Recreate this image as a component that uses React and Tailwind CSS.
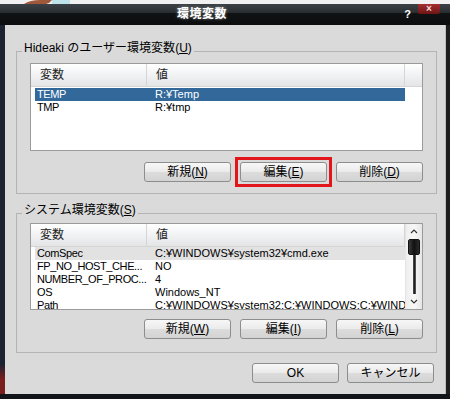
import React from 'react';

const FONT = "font-['Liberation_Sans','Noto_Sans_CJK_JP',sans-serif]";

function Btn({ label, m, className = '' }) {
  return (
    <button
      className={`h-[20px] w-[87px] rounded-[3px] border border-[#8c8d8d] bg-[linear-gradient(to_bottom,#f7f7f7,#ebebeb_48%,#dcdcdc_52%,#d3d3d3)] text-[12px] leading-none text-black ${className}`}
    >
      {label}
      {m && (
        <>
          (<span className="underline">{m}</span>)
        </>
      )}
    </button>
  );
}

function Header({ extra = true }) {
  return (
    <div className="flex h-[23px] border-b border-[#d5d5d5] bg-[linear-gradient(to_bottom,#ffffff,#f1f2f4_50%,#e4e5e7)] text-[12px] leading-[23px] text-[#222]">
      <div className="w-[116px] border-r border-[#d5d5d5] pl-[9px]">変数</div>
      <div className="w-[258px] border-r border-[#d5d5d5] pl-[9px]">値</div>
      {extra && <div className="flex-1" />}
    </div>
  );
}

function Row({ name, value, selected, dim }) {
  const bg = selected ? 'bg-[#32689a] text-white' : dim ? 'bg-[#e2e2e2] text-black' : 'text-black';
  return (
    <div className={`ml-[4px] flex h-[13px] w-[370px] whitespace-nowrap text-[11px] leading-[13px] ${bg}`}>
      <div className="w-[112px] overflow-hidden pl-[2px] tracking-[-0.4px]">{name}</div>
      <div className="flex-1 overflow-hidden pl-[8px]">{value}</div>
    </div>
  );
}

function Scrollbar() {
  return (
    <div className="flex w-[17px] flex-col items-center border-l border-[#e4e4e4] bg-[linear-gradient(to_right,#eeeeee,#f8f8f8,#e6e6e6)]">
      <div className="flex h-[15px] items-center justify-center">
        <svg width="8" height="5" viewBox="0 0 8 5">
          <path d="M1 4 L4 1 L7 4" fill="none" stroke="#333" strokeWidth="1.2" />
        </svg>
      </div>
      <div className="h-[16px] w-[12px] rounded-[2px] border border-[#111] bg-[linear-gradient(to_right,#3a3a3a,#111_50%,#2a2a2a)]" />
      <div className="h-[39px] w-[3px] bg-[linear-gradient(to_right,#555,#222,#666)]" />
      <div className="flex h-[15px] items-center justify-center">
        <svg width="8" height="5" viewBox="0 0 8 5">
          <path d="M1 1 L4 4 L7 1" fill="none" stroke="#333" strokeWidth="1.2" />
        </svg>
      </div>
    </div>
  );
}

function Group({ title, m, className = '', children }) {
  return (
    <fieldset className={`ml-[11px] w-[420px] border border-[#b4b4b4] px-[13px] ${className}`}>
      <legend className="ml-[-8px] px-[2px] pb-[6px] text-[12px] leading-[14px] text-black">
        {title}(<span className="underline">{m}</span>)
      </legend>
      {children}
    </fieldset>
  );
}

export default function App() {
  const userVars = [
    { name: 'TEMP', value: 'R:¥Temp', selected: true },
    { name: 'TMP', value: 'R:¥tmp' },
  ];
  const sysVars = [
    { name: 'ComSpec', value: 'C:¥WINDOWS¥system32¥cmd.exe', dim: true },
    { name: 'FP_NO_HOST_CHE...', value: 'NO' },
    { name: 'NUMBER_OF_PROC...', value: '4' },
    { name: 'OS', value: 'Windows_NT' },
    { name: 'Path', value: 'C:¥WINDOWS¥system32;C:¥WINDOWS;C:¥WIND' },
  ];

  return (
    <div className={`flex h-[399px] w-[450px] flex-col overflow-hidden bg-[#121416] ${FONT}`}>
      {/* wallpaper strip above the window */}
      <svg width="450" height="4" viewBox="0 0 450 4" className="block shrink-0">
        <rect width="450" height="4" fill="#f1f1f1" />
        <path d="M24 4 Q30 0 40 0 L52 0 Q50 3 46 4 Z" fill="#a0583a" />
        <rect x="52" y="0" width="18" height="4" fill="#bfe3ea" />
      </svg>

      {/* title bar */}
      <div className="flex h-[21px] shrink-0 items-start bg-[linear-gradient(to_bottom,#3b4146,#2a2f33_40%,#101214_45%,#0b0c0e)]">
        <div className="ml-[177px] mt-[3px] text-[12px] font-bold leading-[14px] tracking-[0.5px] text-white [text-shadow:0_0_3px_#fff8]">
          環境変数
        </div>
        <div className="flex-1" />
        <div className="mt-[4px] text-[11px] font-bold leading-[12px] text-white">?</div>
        <div className="ml-[7px] mr-[10px] flex h-[10px] w-[22px] items-center justify-center rounded-b-[2px] bg-[linear-gradient(to_bottom,#a33030,#6e1414)] text-[10px] font-bold leading-none text-[#f2dede]">
          ×
        </div>
      </div>

      <div className="flex h-[369px] shrink-0">
        <div className="w-[5px] bg-[linear-gradient(to_bottom,#1d2231_0%,#1d2231_92%,#7a1d1d_96%,#7a1d1d_100%)]" />

        {/* client area */}
        <div className="flex w-[440px] flex-col bg-[#dadada] pt-[16px]">
          <Group title="Hideaki のユーザー環境変数" m="U" className="pb-[11px]">
            <div className="mt-[2px] h-[88px] w-[393px] overflow-hidden border border-[#9b9b9b] bg-white">
              <Header />
              <div className="pt-[1px]">
                {userVars.map((v) => (
                  <Row key={v.name} {...v} />
                ))}
              </div>
            </div>
            <div className="mt-[11px] flex justify-end gap-[9px]">
              <Btn label="新規" m="N" />
              <div className="-m-[5px] flex border-[3px] border-[#e2151b] p-[2px]">
                <Btn label="編集" m="E" />
              </div>
              <Btn label="削除" m="D" />
            </div>
          </Group>

          <Group title="システム環境変数" m="S" className="mt-[9px] pb-[13px]">
            <div className="flex h-[87px] w-[393px] overflow-hidden border border-[#9b9b9b] bg-white">
              <div className="w-[374px] overflow-hidden">
                <Header extra={false} />
                <div>
                  {sysVars.map((v) => (
                    <Row key={v.name} {...v} />
                  ))}
                </div>
              </div>
              <Scrollbar />
            </div>
            <div className="mt-[9px] flex justify-end gap-[9px]">
              <Btn label="新規" m="W" />
              <Btn label="編集" m="I" />
              <Btn label="削除" m="L" />
            </div>
          </Group>

          <div className="mr-[11px] mt-[10px] flex justify-end gap-[8px]">
            <Btn label="OK" className="border-[#3f8bb3]" />
            <Btn label="キャンセル" />
          </div>
        </div>

        <div className="w-[5px] border-l border-[#bdbdbd] bg-[#1c1e20]" />
      </div>

      <div className="h-[5px] shrink-0 bg-[#111418]" />
    </div>
  );
}
